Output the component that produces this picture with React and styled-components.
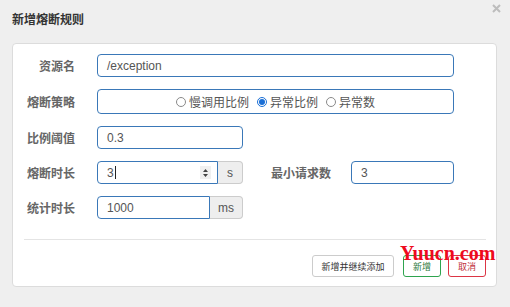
import styled, { createGlobalStyle } from "styled-components";

const GlobalStyle = createGlobalStyle`
  html, body {
    margin: 0;
    padding: 0;
    background: #efefef;
    font-family: "Liberation Sans", "Noto Sans CJK SC", sans-serif;
  }
`;

const Dialog = styled.div`
  position: relative;
  width: 510px;
  height: 307px;
  box-sizing: border-box;
  padding: 0 13px 0 12px;
  background: #efefef;
`;

const TitleBar = styled.div`
  height: 43px;
  display: flex;
  align-items: center;
  padding-bottom: 6px;
  box-sizing: border-box;
  font-size: 12px;
  color: #333;
  font-weight: 600;
`;

const Close = styled.div`
  position: absolute;
  top: 4px;
  right: 9px;
  width: 9px;
  height: 9px;
  display: flex;
`;

const Panel = styled.div`
  height: 244px;
  box-sizing: border-box;
  background: #fff;
  border: 1px solid #dcdcdc;
  border-radius: 4px;
  padding: 10px 10px 10px 11px;
  display: flex;
  flex-direction: column;
`;

const Form = styled.div`
  display: flex;
  flex-direction: column;
  gap: 12px;
`;

const Row = styled.div`
  display: flex;
  align-items: center;
  height: ${(p) => p.$h || 23}px;
`;

const Label = styled.div`
  width: ${(p) => p.$w || 51}px;
  margin-right: ${(p) => p.$gap || 22}px;
  text-align: right;
  font-size: 12px;
  font-weight: 700;
  color: #666;
  white-space: nowrap;
  flex-shrink: 0;
`;

const Input = styled.div`
  width: ${(p) => p.$w}px;
  height: 100%;
  box-sizing: border-box;
  border: 1px solid #3a78b8;
  border-radius: ${(p) => (p.$addon ? "4px 0 0 4px" : "4px")};
  display: flex;
  align-items: center;
  padding: 0 9px;
  font-size: 12px;
  color: #555;
  flex-shrink: 0;
`;

const Addon = styled.div`
  width: ${(p) => p.$w}px;
  height: 100%;
  box-sizing: border-box;
  border: 1px solid #ccc;
  border-left: none;
  border-radius: 0 4px 4px 0;
  background: #eee;
  display: flex;
  align-items: center;
  justify-content: center;
  font-size: 12px;
  color: #555;
  flex-shrink: 0;
`;

const Caret = styled.span`
  display: inline-block;
  width: 1px;
  height: 13px;
  background: #222;
  margin-left: 1px;
`;

const Spinner = styled.span`
  margin-left: auto;
  margin-right: -3px;
  width: 11px;
  height: 13px;
  background: #f0f0f0;
  display: flex;
  align-items: center;
  justify-content: center;
`;

const RadioGroup = styled.div`
  flex: 1;
  display: flex;
  justify-content: center;
  gap: 8px;
`;

const RadioItem = styled.label`
  display: flex;
  align-items: center;
  gap: 3px;
  font-size: 12px;
  color: #555;
`;

const Dot = styled.span`
  width: 10px;
  height: 10px;
  box-sizing: border-box;
  border-radius: 50%;
  border: 1px solid ${(p) => (p.$on ? "#1a6fd6" : "#8a8a8a")};
  display: flex;
  align-items: center;
  justify-content: center;
  &::after {
    content: "";
    width: 6px;
    height: 6px;
    border-radius: 50%;
    background: ${(p) => (p.$on ? "#1a6fd6" : "transparent")};
  }
`;

const Divider = styled.div`
  margin-top: 20px;
  border-top: 1px solid #e4e4e4;
`;

const Footer = styled.div`
  margin-top: 15px;
  display: flex;
  justify-content: flex-end;
`;

const Button = styled.div`
  height: 22px;
  box-sizing: border-box;
  width: ${(p) => p.$w}px;
  margin-left: ${(p) => p.$ml || 0}px;
  border: 1px solid ${(p) => p.$border || "#ccc"};
  border-radius: 3px;
  display: flex;
  align-items: center;
  justify-content: center;
  font-size: 9px;
  color: ${(p) => p.$color || "#333"};
  background: #fff;
`;

const Watermark = styled.div`
  position: absolute;
  left: 400px;
  top: 242px;
  font-family: "Liberation Serif", serif;
  font-weight: 700;
  font-size: 20px;
  color: #ee0a1e;
`;

function App() {
  return (
    <>
      <GlobalStyle />
      <Dialog>
        <TitleBar>新增熔断规则</TitleBar>
        <Close>
          <svg width="9" height="9" viewBox="0 0 9 9">
            <path d="M1 1L8 8M8 1L1 8" stroke="#bdbdbd" strokeWidth="2" />
          </svg>
        </Close>
        <Panel>
          <Form>
            <Row>
              <Label>资源名</Label>
              <Input $w={357}>/exception</Input>
            </Row>
            <Row $h={25}>
              <Label>熔断策略</Label>
              <Input $w={357}>
                <RadioGroup>
                  <RadioItem>
                    <Dot />
                    慢调用比例
                  </RadioItem>
                  <RadioItem>
                    <Dot $on />
                    异常比例
                  </RadioItem>
                  <RadioItem>
                    <Dot />
                    异常数
                  </RadioItem>
                </RadioGroup>
              </Input>
            </Row>
            <Row>
              <Label>比例阈值</Label>
              <Input $w={146}>0.3</Input>
            </Row>
            <Row>
              <Label>熔断时长</Label>
              <Input $w={121} $addon>
                3<Caret />
                <Spinner>
                  <svg width="5" height="8" viewBox="0 0 5 8">
                    <path d="M2.5 0L5 3H0Z M0 5H5L2.5 8Z" fill="#444" />
                  </svg>
                </Spinner>
              </Input>
              <Addon $w={25}>s</Addon>
              <Label $w={88} $gap={20}>最小请求数</Label>
              <Input $w={103}>3</Input>
            </Row>
            <Row>
              <Label>统计时长</Label>
              <Input $w={113} $addon>1000</Input>
              <Addon $w={33}>ms</Addon>
            </Row>
          </Form>
          <Divider />
          <Footer>
            <Button $w={82}>新增并继续添加</Button>
            <Button $w={38} $ml={9} $border="#2ea44f" $color="#2a7a3c">新增</Button>
            <Button $w={38} $ml={7} $border="#dc3545" $color="#c0303c">取消</Button>
          </Footer>
        </Panel>
        <Watermark>Yuucn.com</Watermark>
      </Dialog>
    </>
  );
}

export default App;
